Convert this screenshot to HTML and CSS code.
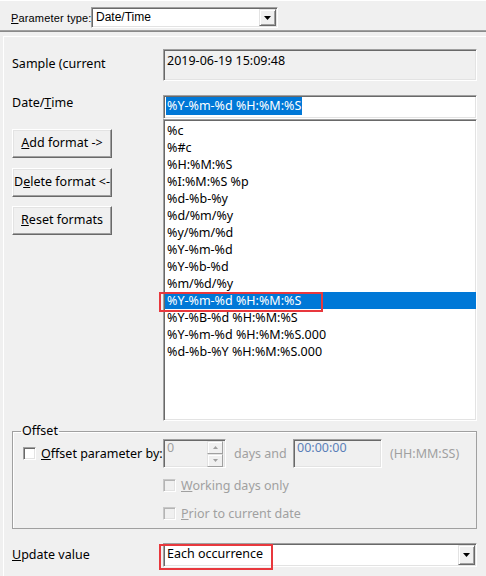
FILE: index.html
```html
<!DOCTYPE html>
<html>
<head>
<meta charset="utf-8">
<link rel="stylesheet" href="styles.css">
</head>
<body>
<div class="top">
  <span class="top-label"><u>P</u>arameter type:</span>
  <div class="field combo combo-top">
    <span class="combo-text">Date/Time</span>
    <span class="dd-btn"><svg width="7" height="4" viewBox="0 0 7 4"><path d="M0 0h7L3.5 4z" fill="#000"/></svg></span>
  </div>
</div>
<div class="sep"></div>
<div class="panel">
  <div class="row row-sample">
    <div class="lcol lbl">Sample (current</div>
    <div class="field sample-field">2019-06-19 15:09:48</div>
  </div>
  <div class="row row-dt">
    <div class="lcol lbl">Date/<u>T</u>ime</div>
    <div class="field dt-field"><span class="hl">%Y-%m-%d %H:%M:%S</span></div>
  </div>
  <div class="row row-list">
    <div class="lcol btns">
      <div class="btn"><u>A</u>dd format -&gt;</div>
      <div class="btn">D<u>e</u>lete format &lt;-</div>
      <div class="btn"><u>R</u>eset formats</div>
    </div>
    <div class="field list">
      <div class="item">%c</div>
      <div class="item">%#c</div>
      <div class="item">%H:%M:%S</div>
      <div class="item">%I:%M:%S %p</div>
      <div class="item">%d-%b-%y</div>
      <div class="item">%d/%m/%y</div>
      <div class="item">%y/%m/%d</div>
      <div class="item">%Y-%m-%d</div>
      <div class="item">%Y-%b-%d</div>
      <div class="item">%m/%d/%y</div>
      <div class="item selected">%Y-%m-%d %H:%M:%S<span class="mark mark-list"></span></div>
      <div class="item">%Y-%B-%d %H:%M:%S</div>
      <div class="item">%Y-%m-%d %H:%M:%S.000</div>
      <div class="item">%d-%b-%Y %H:%M:%S.000</div>
    </div>
  </div>
  <fieldset class="group">
    <legend>Offset</legend>
    <div class="orow">
      <div class="ocol">
        <span class="cb"></span><span><u>O</u>ffset parameter by:</span>
      </div>
      <div class="field spin">
        <span class="spin-text">0</span>
        <span class="spin-btns">
          <span class="sbtn"><svg width="5" height="3" viewBox="0 0 5 3"><path d="M0 3h5L2.5 0z" fill="#a0a0a0"/></svg></span>
          <span class="sbtn"><svg width="5" height="3" viewBox="0 0 5 3"><path d="M0 0h5L2.5 3z" fill="#a0a0a0"/></svg></span>
        </span>
      </div>
      <span class="dis days">days and</span>
      <div class="field timebox">00:00:00</div>
      <span class="dis hms">(HH:MM:SS)</span>
    </div>
    <div class="crow crow-work">
      <span class="cb cb-dis"></span><span class="dis"><u>W</u>orking days only</span>
    </div>
    <div class="crow crow-prior">
      <span class="cb cb-dis"></span><span class="dis"><u>P</u>rior to current date</span>
    </div>
  </fieldset>
  <div class="row row-upd">
    <div class="lcol lbl"><u>U</u>pdate value</div>
    <div class="field combo combo-upd">
      <span class="combo-text">Each occurrence</span>
      <span class="dd-btn"><svg width="7" height="4" viewBox="0 0 7 4"><path d="M0 0h7L3.5 4z" fill="#000"/></svg></span>
      <span class="mark mark-upd"></span>
    </div>
  </div>
</div>
</body>
</html>
```
FILE: styles.css
```css
html, body {
  margin: 0;
  padding: 0;
}
body {
  width: 486px;
  height: 576px;
  overflow: hidden;
  background: #f0f0f0;
  font-family: "Noto Sans", "Open Sans", sans-serif;
  font-size: 12.5px;
  color: #000;
}
u {
  text-decoration: underline;
  text-underline-offset: 1px;
}
.field {
  box-sizing: border-box;
  border: 1px solid;
  border-color: #a0a0a0 #ffffff #ffffff #a0a0a0;
  box-shadow: inset 1px 1px #696969, inset -1px -1px #e3e3e3;
}

/* top bar */
.top {
  height: 29px;
  border-top: 1px solid #ffffff;
  display: flex;
  align-items: flex-start;
  padding: 6px 0 0 11px;
  box-sizing: border-box;
  font-family: "Liberation Sans", Arial, sans-serif;
  font-size: 11px;
}
.top-label {
  width: 80px;
  flex: none;
  white-space: nowrap;
  line-height: 20px;
  margin-top: 1px;
  letter-spacing: 0.15px;
}
.combo {
  display: flex;
  align-items: stretch;
  background: #fff;
  position: relative;
}
.combo-top {
  width: 187px;
  height: 21px;
  font-size: 12px;
}
.combo-text {
  flex: 1;
  padding-left: 4px;
  line-height: 18px;
  white-space: nowrap;
}
.dd-btn {
  width: 17px;
  flex: none;
  margin: 1px;
  box-sizing: border-box;
  background: #f0f0f0;
  border: 1px solid;
  border-color: #e3e3e3 #696969 #696969 #e3e3e3;
  box-shadow: inset 1px 1px #fff, inset -1px -1px #a0a0a0;
  display: flex;
  align-items: center;
  justify-content: center;
}
.sep {
  height: 2px;
  background: #8a8a8a;
  border-top: 1px solid #a0a0a0;
  box-sizing: border-box;
  margin-top: 1px;
}

/* panel */
.panel {
  margin: 4px 0 0 3px;
  border-top: 1px solid #ffffff;
  border-left: 1px solid #ffffff;
  padding: 12px 9px 0 8px;
  height: 540px;
  box-sizing: border-box;
}
.row {
  display: flex;
}
.lcol {
  width: 151px;
  flex: none;
}
.lbl {
  line-height: 16px;
  white-space: nowrap;
}
.row-sample .lbl {
  padding-top: 7px;
}
.sample-field {
  width: 314px;
  height: 32px;
  background: #f0f0f0;
  padding: 3px 3px;
  line-height: 16px;
}
.row-dt {
  margin-top: 14px;
}
.dt-field {
  width: 314px;
  height: 24px;
  background: #fff;
  padding: 1px 2px;
}
.hl {
  display: inline-block;
  height: 18px;
  line-height: 18px;
  background: #0078d7;
  color: #fff;
  padding: 0 1px;
}
.btns {
  padding-top: 10px;
}
.btn {
  width: 100px;
  height: 29px;
  box-sizing: border-box;
  border: 1px solid;
  border-color: #fff #696969 #696969 #fff;
  box-shadow: inset -1px -1px #a0a0a0, inset 1px 1px #e3e3e3;
  text-align: center;
  line-height: 26px;
  white-space: nowrap;
  overflow: hidden;
  padding: 0 1px;
  margin-bottom: 10px;
}
.btn:nth-child(2) {
  margin-bottom: 9px;
}
.list {
  width: 314px;
  height: 302px;
  background: #fff;
  padding: 2px 0 0 1px;
}
.item {
  height: 17px;
  line-height: 17px;
  padding-left: 2px;
  white-space: nowrap;
  position: relative;
}
.item.selected {
  background: #0078d7;
  color: #fff;
}
.mark {
  position: absolute;
  box-sizing: border-box;
  border: 2px solid #e8383d;
  pointer-events: none;
}
.mark-list {
  left: -6px;
  top: 0;
  width: 164px;
  height: 20px;
}

/* group */
.group {
  margin: 2px 0 0 0;
  padding: 0 0 5px 0;
  width: 465px;
  box-sizing: border-box;
  border: 1px solid #a0a0a0;
  box-shadow: inset 1px 1px #fff;
  min-width: 0;
}
.group legend {
  margin-left: 8px;
  padding: 0 1px;
  line-height: 16px;
}
.orow {
  display: flex;
  align-items: center;
  height: 29px;
}
.ocol {
  width: 150px;
  min-width: 0;
  flex: none;
  box-sizing: border-box;
  padding-left: 10px;
  display: flex;
  align-items: center;
  white-space: nowrap;
}
.cb {
  width: 13px;
  height: 13px;
  flex: none;
  box-sizing: border-box;
  border: 1px solid;
  border-color: #a0a0a0 #fff #fff #a0a0a0;
  box-shadow: inset 1px 1px #696969, inset -1px -1px #e3e3e3;
  background: #fff;
  margin-right: 5px;
}
.cb-dis {
  border-color: #c8c8c8 #fff #fff #c8c8c8;
  box-shadow: inset 1px 1px #b4b4b4, inset -1px -1px #e3e3e3;
  background: #f0f0f0;
}
.dis {
  color: #a0a0a0;
  white-space: nowrap;
}
.spin {
  width: 63px;
  height: 29px;
  flex: none;
  background: #f0f0f0;
  display: flex;
  align-items: flex-start;
  padding: 1px;
}
.spin-text {
  flex: 1;
  color: #a0a0a0;
  padding-left: 2px;
  line-height: 14px;
}
.spin-btns {
  display: flex;
  flex-direction: column;
  width: 16px;
  margin-right: 1px;
}
.sbtn {
  height: 13px;
  box-sizing: border-box;
  border: 1px solid;
  border-color: #e3e3e3 #a0a0a0 #a0a0a0 #e3e3e3;
  box-shadow: inset 1px 1px #fff;
  display: flex;
  align-items: center;
  justify-content: center;
}
.days {
  margin-left: 8px;
  width: 52px;
  flex: none;
}
.timebox {
  width: 89px;
  height: 29px;
  flex: none;
  margin-left: 7px;
  background: #f0f0f0;
  color: #5b7fb8;
  padding: 0 3px;
  line-height: 16px;
}
.hms {
  margin-left: 8px;
}
.crow {
  display: flex;
  align-items: center;
  height: 20px;
  padding-left: 150px;
}
.crow-work {
  margin-top: 7px;
}
.crow-prior {
  margin-top: 8px;
}

/* update row */
.row-upd {
  margin-top: 14px;
  align-items: center;
}
.combo-upd {
  width: 314px;
  height: 24px;
}
.combo-upd .combo-text {
  padding-left: 3px;
  line-height: 20px;
}
.mark-upd {
  left: -5px;
  top: 0;
  width: 114px;
  height: 26px;
}
```
